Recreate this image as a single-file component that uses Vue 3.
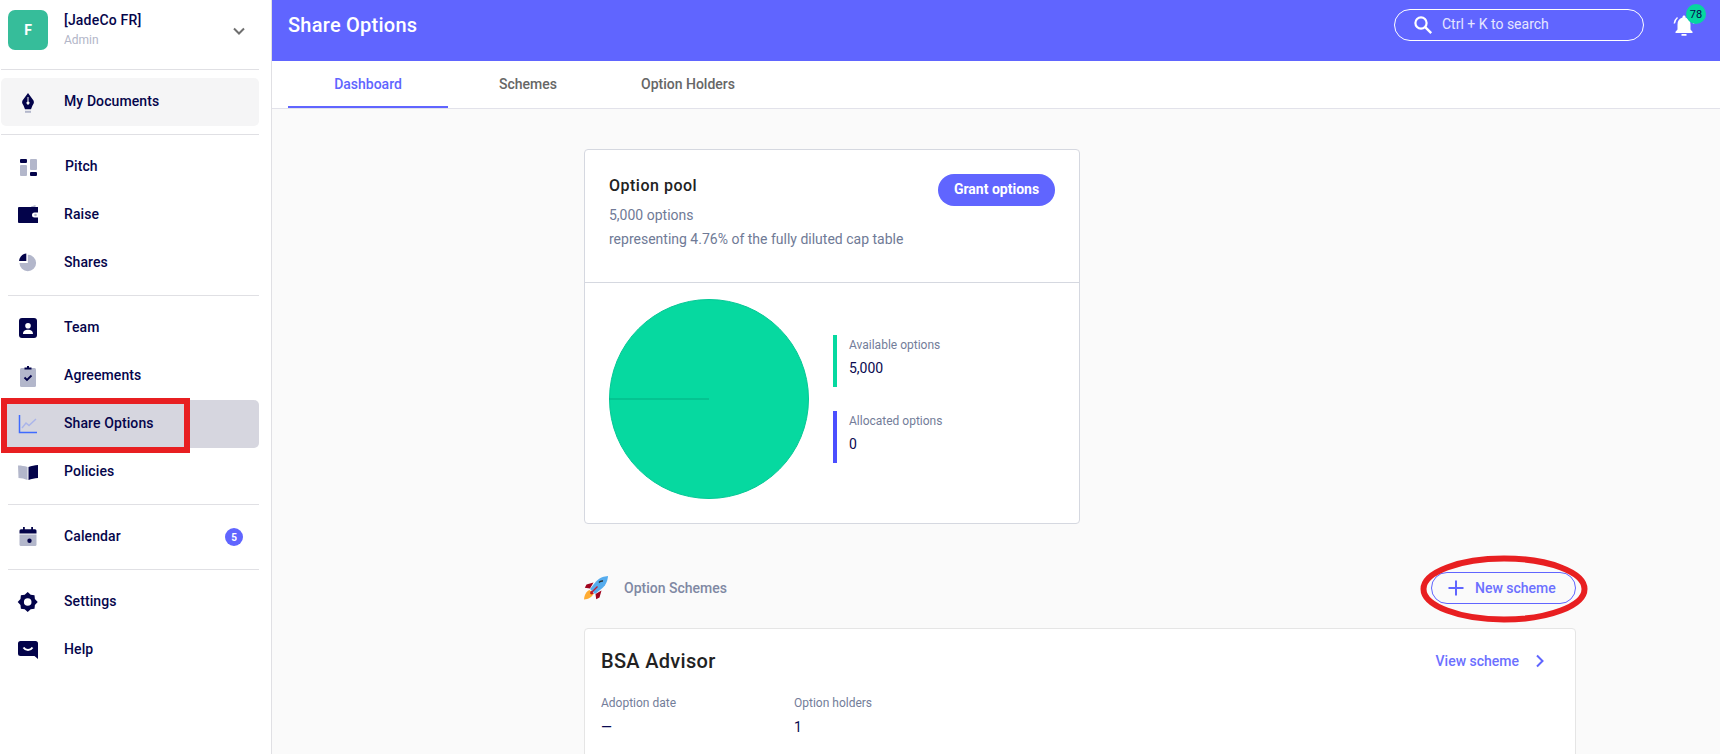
<template>
  <div class="app">
    <aside class="sidebar">
      <div class="account">
        <div class="avatar">F</div>
        <div class="account-text">
          <div class="account-name">[JadeCo FR]</div>
          <div class="account-role">Admin</div>
        </div>
        <svg class="account-chevron" width="14" height="10" viewBox="0 0 14 10">
          <path d="M2 2.5l5 5 5-5" fill="none" stroke="#6f6f6f" stroke-width="2" />
        </svg>
      </div>

      <div class="nav-group first">
        <div v-for="item in navGroups[0]" :key="item.label" class="nav-row docs">
          <svg class="nav-icon" width="20" height="20" viewBox="0 0 20 20">
            <path v-for="(p, i) in item.icon" :key="i" :d="p.d" :fill="p.fill || 'none'" :stroke="p.stroke || 'none'" :stroke-width="p.width || 0" :fill-rule="p.rule || 'nonzero'" />
          </svg>
          <span class="nav-label">{{ item.label }}</span>
        </div>
      </div>

      <div v-for="(group, g) in navGroups.slice(1)" :key="g" class="nav-group">
        <div v-for="item in group" :key="item.label" :class="['nav-row', { active: item.active }]">
          <svg class="nav-icon" width="20" height="20" viewBox="0 0 20 20">
            <path v-for="(p, i) in item.icon" :key="i" :d="p.d" :fill="p.fill || 'none'" :stroke="p.stroke || 'none'" :stroke-width="p.width || 0" :fill-rule="p.rule || 'nonzero'" />
          </svg>
          <span :class="['nav-label', { nudge: item.nudge }]">{{ item.label }}</span>
          <span v-if="item.badge" class="nav-badge">{{ item.badge }}</span>
          <div v-if="item.active" class="red-box"></div>
        </div>
      </div>
    </aside>

    <div class="main">
      <header class="topbar">
        <h1 class="page-title">Share Options</h1>
        <div class="search">
          <svg width="20" height="20" viewBox="0 0 20 20">
            <circle cx="8" cy="8" r="5.6" fill="none" stroke="#fff" stroke-width="2.2" />
            <path d="M12.2 12.2l6 6" stroke="#fff" stroke-width="2.4" />
          </svg>
          <span>Ctrl + K to search</span>
        </div>
        <div class="bell">
          <svg width="24" height="24" viewBox="0 0 24 24">
            <path d="M12 1.500c-.9 0-1.500.6-1.500 1.500v.5C7.300 4.300 5.500 7 5.500 10.500v5l-2 2.300V19h17v-1.200l-2-2.300v-5c0-3.500-1.800-6.200-5-7V3c0-.9-.6-1.500-1.500-1.500zM9.500 20h5v1.800h-5z" fill="#fff" />
            <path d="M5.500 3.500C3.700 5 2.600 7 2.300 9.500M18.500 3.500C20.300 5 21.400 7 21.700 9.500" fill="none" stroke="#fff" stroke-width="1.500" />
          </svg>
          <span class="bell-badge">78</span>
        </div>
      </header>

      <nav class="tabs">
        <div v-for="(tab, i) in tabs" :key="tab" :class="['tab', { current: i === 0 }]">{{ tab }}</div>
      </nav>

      <div class="content">
        <section class="card pool-card">
          <div class="pool-head">
            <div>
              <h2 class="pool-title">Option pool</h2>
              <p class="pool-line">5,000 options</p>
              <p class="pool-line">representing 4.76% of the fully diluted cap table</p>
            </div>
            <button class="grant-btn">Grant options</button>
          </div>
          <div class="pool-chart">
            <svg class="pie" width="200" height="200" viewBox="0 0 200 200">
              <circle cx="100" cy="100" r="99.500" fill="#06d9a0" stroke="#05c795" />
              <path d="M0 100h100" stroke="#05bd8d" stroke-width="1.500" />
            </svg>
            <div class="legend">
              <div v-for="entry in legend" :key="entry.label" class="legend-item" :style="{ borderColor: entry.color }">
                <div class="legend-label">{{ entry.label }}</div>
                <div class="legend-value">{{ entry.value }}</div>
              </div>
            </div>
          </div>
        </section>

        <div class="schemes-head">
          <svg class="rocket" width="24" height="24" viewBox="0 0 24 24">
            <path d="M5.500 14C2.500 15.200.3 19 0 23.500c4.500-.2 8-2.500 9.500-5.500z" fill="#ffac33" />
            <path d="M9.500 6.500L2.500 8.500 .8 11.800 6 12.500zM17.500 14.500l-2 7-3.300 1.800-.7-5.300z" fill="#a0041e" />
            <path d="M24 0c-3.500.3-8.500 1.500-12 5.500L6 13l5 5 7.500-6c4-3.500 5.200-8.500 5.500-12z" fill="#55acee" />
            <path d="M7 14.500l3 3-2.800 1-1.200-1.200z" fill="#c1121f" />
            <path d="M15 6.500c1-1.200 2.700-1.700 4-1.500" fill="none" stroke="#292f33" stroke-width="1.500" />
            <path d="M7.500 16.500l6-6" stroke="#be1931" stroke-width="1.200" />
          </svg>
          <span class="schemes-title">Option Schemes</span>
          <div class="new-wrap">
            <button class="new-btn">
              <svg width="16" height="16" viewBox="0 0 16 16">
                <path d="M8 .5v15M.5 8h15" stroke="#6065ff" stroke-width="2" />
              </svg>
              New scheme
            </button>
            <svg class="red-ring" width="168" height="70" viewBox="0 0 168 70">
              <ellipse cx="84" cy="35" rx="80.500" ry="30.500" fill="none" stroke="#e81f21" stroke-width="6" />
            </svg>
          </div>
        </div>

        <section class="card scheme-card">
          <div class="scheme-top">
            <h2 class="scheme-title">BSA Advisor</h2>
            <div class="view-link">
              View scheme
              <svg width="10" height="14" viewBox="0 0 10 14">
                <path d="M2 1.500L7.500 7 2 12.500" fill="none" stroke="#6065ff" stroke-width="2" />
              </svg>
            </div>
          </div>
          <div class="scheme-stats">
            <div v-for="stat in stats" :key="stat.label" class="stat">
              <div class="legend-label">{{ stat.label }}</div>
              <div class="legend-value">{{ stat.value }}</div>
            </div>
          </div>
        </section>
      </div>
    </div>
  </div>
</template>

<script setup>
const dark = '#03034a'
const light = '#b3b7cb'

const navGroups = [
  [
    {
      label: 'My Documents',
      icon: [
        { d: 'M10 1l5.500 7.500c1 2 0 3.500-1 5L13 17.300H7l-1.500-3.800c-1-1.500-2-3-1-5zM9.500 5h1v4.600a1.500 1.500 0 1 1-1 0z', fill: dark, rule: 'evenodd' },
        { d: 'M7 18.800h6v2H7z', fill: light }
      ]
    }
  ],
  [
    {
      label: 'Pitch',
      nudge: true,
      icon: [
        { d: 'M3 2h5a1 1 0 0 1 1 1v2a1 1 0 0 1-1 1H3a1 1 0 0 1-1-1V3a1 1 0 0 1 1-1zM13 15h5a1 1 0 0 1 1 1v2a1 1 0 0 1-1 1h-5a1 1 0 0 1-1-1v-2a1 1 0 0 1 1-1z', fill: dark },
        { d: 'M3 8h5a1 1 0 0 1 1 1v9a1 1 0 0 1-1 1H3a1 1 0 0 1-1-1V9a1 1 0 0 1 1-1zM13 2h5a1 1 0 0 1 1 1v9a1 1 0 0 1-1 1h-5a1 1 0 0 1-1-1V3a1 1 0 0 1 1-1z', fill: light }
      ]
    },
    {
      label: 'Raise',
      icon: [
        { d: 'M13 1.500L17.500 0v2.500H13z', fill: light },
        { d: 'M1 2h19v5.500h-3.500a2.500 2.500 0 0 0 0 5H20V18H1a1 1 0 0 1-1-1V3a1 1 0 0 1 1-1z', fill: dark },
        { d: 'M17.500 8.700a1.300 1.300 0 1 1 0 2.600 1.300 1.300 0 0 1 0-2.600z', fill: light }
      ]
    },
    {
      label: 'Shares',
      icon: [
        { d: 'M9.800 1.700A8.300 8.300 0 1 1 1.500 10h8.300z', fill: light },
        { d: 'M8.300 0.500V8H1C1.300 4 4.300 1 8.300 0.500z', fill: dark }
      ]
    }
  ],
  [
    {
      label: 'Team',
      icon: [
        { d: 'M4 0h12a3 3 0 0 1 3 3v14a3 3 0 0 1-3 3H4a3 3 0 0 1-3-3V3a3 3 0 0 1 3-3z', fill: dark },
        { d: 'M10 5a2.800 2.800 0 1 1 0 5.600A2.800 2.800 0 0 1 10 5zM5 16c0-3 2.200-4.300 5-4.300s5 1.300 5 4.300z', fill: '#fff' }
      ]
    },
    {
      label: 'Agreements',
      icon: [
        { d: 'M3.500 2h13A1.500 1.500 0 0 1 18 3.500v16a1.500 1.500 0 0 1-1.500 1.500h-13A1.500 1.500 0 0 1 2 19.500v-16A1.500 1.500 0 0 1 3.500 2z', fill: light },
        { d: 'M9 0h2v1.500h2.500v2h-7v-2H9z', fill: dark },
        { d: 'M6.500 11.500L9 14l4.500-4.500', stroke: dark, width: 1.8 }
      ]
    },
    {
      label: 'Share Options',
      active: true,
      icon: [
        { d: 'M4 14L8 9l3 2.500L18 5', stroke: '#aab4ea', width: 1.4 },
        { d: 'M1.500 1v17.500H19', stroke: '#3f6bff', width: 1.500 }
      ]
    },
    {
      label: 'Policies',
      icon: [
        { d: 'M0 3.500c3.500 0 6.500.5 9.500 1.500v13c-3-1.200-6-1.800-9-2z', fill: light },
        { d: 'M10.500 5c3-1 6-1.700 9.500-2v13c-3.500.2-6.500 1-9.500 2z', fill: dark }
      ]
    }
  ],
  [
    {
      label: 'Calendar',
      badge: 5,
      icon: [
        { d: 'M1.500 7.500h17V17.500a1.500 1.500 0 0 1-1.500 1.500H3a1.500 1.500 0 0 1-1.500-1.500z', fill: light },
        { d: 'M5 0h1.800v2.200h6.400V0H15v2.200h2a1.500 1.500 0 0 1 1.500 1.500V6.500h-17V3.700A1.500 1.500 0 0 1 3 2.200h2zM11.500 11.500a2.200 2.200 0 1 1 0 4.400 2.200 2.200 0 0 1 0-4.400z', fill: dark }
      ]
    }
  ],
  [
    {
      label: 'Settings',
      icon: [
        { d: 'M9.700 0L12.700 2.800 16.500 3.200 16.900 7 19.700 10 16.900 13 16.500 16.800 12.700 17.200 9.700 20 6.700 17.200 2.900 16.800 2.500 13-.3 10 2.500 7 2.900 3.200 6.700 2.800zM9.700 6.200a3.800 3.800 0 1 0 0 7.600 3.800 3.800 0 0 0 0-7.600z', fill: dark, rule: 'evenodd' }
      ]
    },
    {
      label: 'Help',
      icon: [
        { d: 'M2.500 1h15A2.500 2.500 0 0 1 20 3.500V19l-3.500-3H2.500A2.500 2.500 0 0 1 0 13.500v-10A2.500 2.500 0 0 1 2.500 1z', fill: dark },
        { d: 'M5.500 7.500c2 3.200 7 3.200 9 0', stroke: '#fff', width: 2 }
      ]
    }
  ]
]

const tabs = ['Dashboard', 'Schemes', 'Option Holders']

const legend = [
  { label: 'Available options', value: '5,000', color: '#06d9a0' },
  { label: 'Allocated options', value: '0', color: '#4c4fff' }
]

const stats = [
  { label: 'Adoption date', value: '—' },
  { label: 'Option holders', value: '1' }
]
</script>

<style>
html,
body {
  margin: 0;
  background: #fafafa;
}
</style>

<style scoped>
.app {
  display: flex;
  height: 754px;
  overflow: hidden;
  font-family: Roboto, "Liberation Sans", sans-serif;
  background: #fafafa;
}

.sidebar {
  width: 272px;
  flex-shrink: 0;
  box-sizing: border-box;
  background: #fff;
  border-right: 1px solid #e0e0e4;
  padding-right: 12px;
}

.account {
  display: flex;
  align-items: center;
  height: 69px;
  margin-left: 1px;
  padding-left: 7px;
  border-bottom: 1px solid #e0e0e4;
}

.avatar {
  width: 40px;
  height: 40px;
  margin-top: -10px;
  border-radius: 7px;
  background: #36bd9a;
  color: #fff;
  font-size: 14px;
  font-weight: 700;
  display: flex;
  align-items: center;
  justify-content: center;
}

.account-text {
  margin-left: 16px;
  margin-top: -11px;
  flex: 1;
}

.account-name {
  margin-bottom: 2px;
  font-size: 14px;
  font-weight: 500;
  line-height: 20px;
  letter-spacing: 0.2px;
  color: #05054b;
}

.account-role {
  font-size: 12px;
  line-height: 16px;
  color: #b2b6c8;
}

.account-chevron {
  margin-right: 13px;
  margin-top: -8px;
}

.nav-group {
  margin-left: 8px;
  padding: 8px 0;
  border-bottom: 1px solid #e0e0e4;
}

.nav-group:last-child {
  border-bottom: none;
}

.nav-group.first {
  margin-left: 1px;
}

.nav-row {
  position: relative;
  display: flex;
  align-items: center;
  height: 48px;
  font-size: 14px;
  font-weight: 500;
  color: #05054b;
  padding-left: 10px;
  border-radius: 5px;
}

.nav-row.docs {
  background: #f5f5f6;
  padding-left: 17px;
}

.nav-row.active {
  background: #d6d6df;
  margin-left: -7px;
  padding-left: 17px;
}

.nav-icon {
  flex-shrink: 0;
  overflow: visible;
  margin-right: 26px;
}

.nav-label {
  margin-top: -2px;
  letter-spacing: 0.1px;
}

.nav-label.nudge {
  margin-left: 1px;
}

.nav-badge {
  position: absolute;
  right: 16px;
  top: 15px;
  width: 18px;
  height: 18px;
  border-radius: 50%;
  background: #6065ff;
  color: #fff;
  font-size: 10px;
  font-weight: 700;
  display: flex;
  align-items: center;
  justify-content: center;
}

.red-box {
  position: absolute;
  left: 0;
  top: -2px;
  width: 189px;
  height: 55px;
  box-sizing: border-box;
  border: 6px solid #e81f21;
}

.main {
  flex: 1;
  min-width: 0;
}

.topbar {
  display: flex;
  align-items: center;
  height: 61px;
  padding: 0 24px 0 16px;
  background: #6065ff;
  color: #fff;
}

.page-title {
  margin: -12px 0 0;
  font-size: 20px;
  font-weight: 500;
  letter-spacing: 0.25px;
  flex: 1;
}

.search {
  display: flex;
  align-items: center;
  gap: 9px;
  box-sizing: border-box;
  width: 250px;
  height: 32px;
  margin-top: -11px;
  padding-left: 18px;
  border: 1px solid #fff;
  border-radius: 16px;
  font-size: 14px;
  line-height: 18px;
  color: #e6e6ff;
}

.search span {
  margin-top: -2px;
}

.bell {
  position: relative;
  width: 24px;
  height: 24px;
  margin-left: 28px;
  margin-top: -9px;
}

.bell-badge {
  position: absolute;
  left: 14px;
  top: -10px;
  width: 20px;
  height: 20px;
  border-radius: 50%;
  background: #06d6a0;
  color: #05054b;
  font-size: 11px;
  display: flex;
  align-items: center;
  justify-content: center;
}

.tabs {
  display: flex;
  height: 47px;
  padding-left: 16px;
  background: #fff;
  border-bottom: 1px solid #e2e2ea;
}

.tab {
  width: 160px;
  height: 47px;
  box-sizing: border-box;
  padding-top: 15px;
  text-align: center;
  font-size: 14px;
  font-weight: 500;
  color: #666;
}

.tab.current {
  color: #6065ff;
  border-bottom: 2px solid #6065ff;
}

.content {
  width: 992px;
  margin-left: 312px;
  padding-top: 40px;
}

.card {
  box-sizing: border-box;
  background: #fff;
  border: 1px solid #d5d8e0;
  border-radius: 4px;
}

.pool-card {
  width: 496px;
  height: 375px;
}

.pool-head {
  display: flex;
  justify-content: space-between;
  height: 133px;
  box-sizing: border-box;
  padding: 24px 24px 0;
  border-bottom: 1px solid #d5d8e0;
}

.pool-title {
  margin: 0 0 5px;
  font-size: 16px;
  font-weight: 500;
  line-height: 24px;
  letter-spacing: 0.5px;
  color: #222;
}

.pool-line {
  margin: 0;
  font-size: 14px;
  line-height: 24px;
  color: #6f7a96;
}

.grant-btn {
  height: 32px;
  width: 117px;
  padding: 0 0 2px;
  border: none;
  border-radius: 16px;
  background: #6065ff;
  color: #fff;
  font: 700 14px Roboto, sans-serif;
}

.pool-chart {
  display: flex;
  align-items: center;
  padding: 16px 24px;
  gap: 24px;
}

.legend {
  display: flex;
  flex-direction: column;
  gap: 24px;
}

.legend-item {
  height: 52px;
  box-sizing: border-box;
  padding: 1px 0 0 12px;
  border-left: 4px solid;
}

.legend-item .legend-value {
  margin-top: 2px;
}

.legend-label {
  font-size: 12px;
  line-height: 18px;
  color: #737d99;
}

.legend-value {
  margin-top: 3px;
  font-size: 14px;
  line-height: 24px;
  color: #0a0a50;
}

.schemes-head {
  display: flex;
  align-items: center;
  height: 32px;
  margin-top: 48px;
}

.rocket {
  margin-right: 16px;
}

.schemes-title {
  flex: 1;
  font-size: 14px;
  font-weight: 500;
  color: #7f88a3;
}

.new-wrap {
  position: relative;
}

.new-btn {
  display: flex;
  align-items: center;
  gap: 11px;
  box-sizing: border-box;
  width: 145px;
  height: 32px;
  padding-left: 16px;
  background: transparent;
  border: 1px solid #6065ff;
  border-radius: 16px;
  color: #6c70ff;
  font: 500 14px Roboto, sans-serif;
}

.red-ring {
  position: absolute;
  left: -11px;
  top: -18px;
  pointer-events: none;
}

.scheme-card {
  height: 200px;
  margin-top: 24px;
  padding: 16px;
  border-color: #e5e5e5;
}

.scheme-top {
  display: flex;
  align-items: center;
  justify-content: space-between;
  height: 32px;
}

.scheme-title {
  margin: 0;
  font-size: 20px;
  font-weight: 500;
  letter-spacing: 0.3px;
  color: #222;
}

.view-link {
  display: flex;
  align-items: center;
  gap: 16px;
  margin-right: 14px;
  font-size: 14px;
  font-weight: 500;
  color: #6c70ff;
}

.scheme-stats {
  display: flex;
  margin-top: 17px;
}

.stat {
  width: 193px;
}
</style>
